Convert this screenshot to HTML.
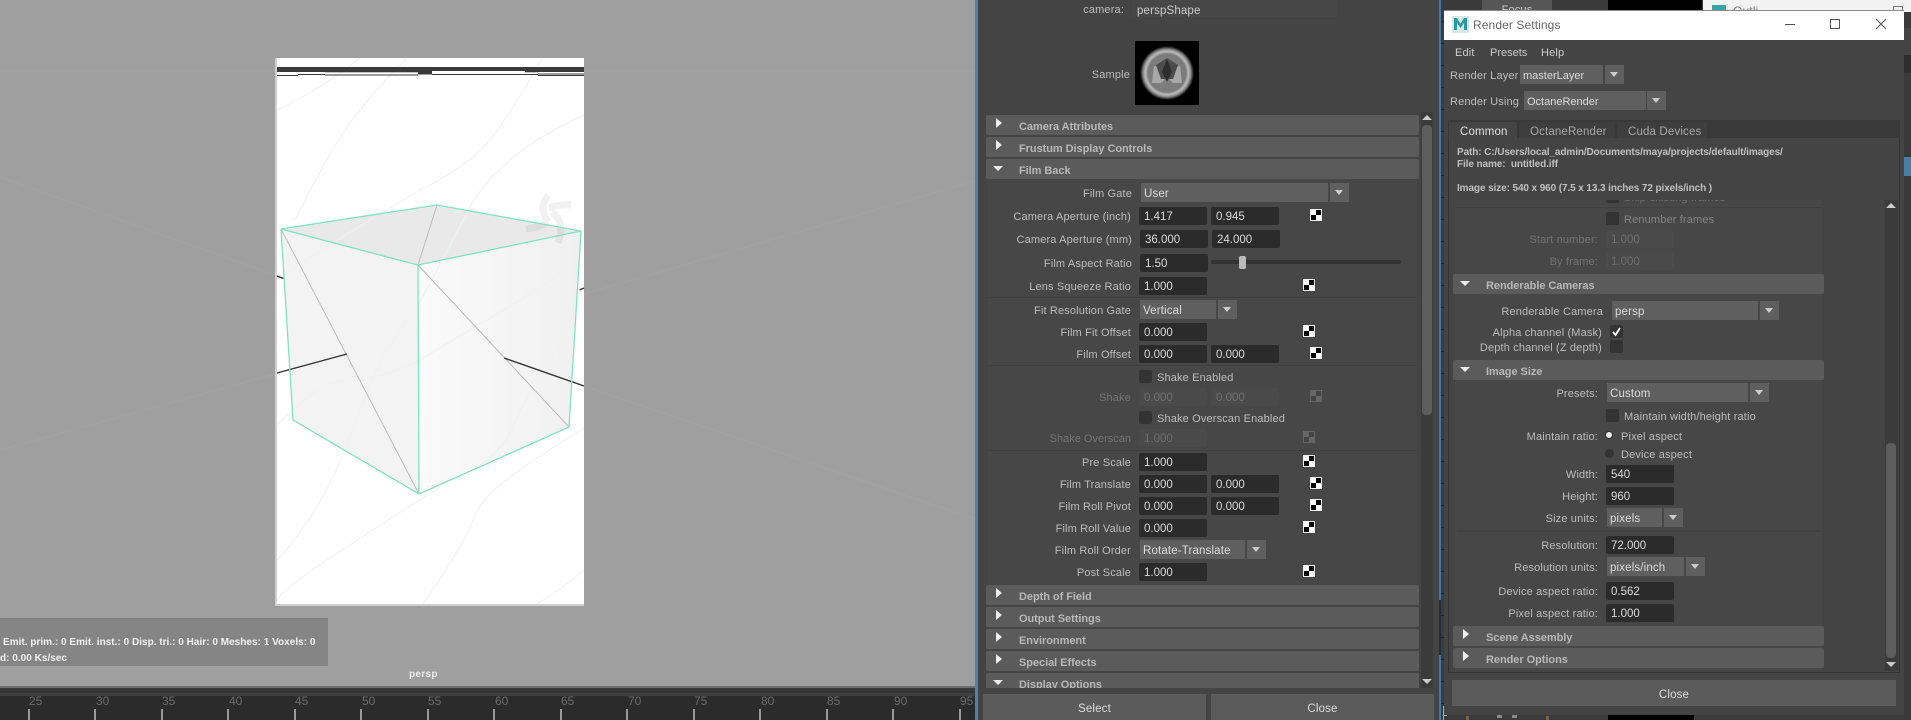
<!DOCTYPE html>
<html><head><meta charset="utf-8"><title>Render Settings</title>
<style>
html,body{margin:0;padding:0;background:#444;}
#p{position:relative;width:1911px;height:720px;overflow:hidden;background:#444;font-family:"Liberation Sans",sans-serif;font-size:11px;color:#bdbdbd;letter-spacing:.15px;}
#p div,#p span.a{position:absolute;white-space:pre;box-sizing:border-box;}
.la{left:832px;width:300px;text-align:right;height:18px;line-height:20px;}
.lb{left:831px;width:300px;text-align:right;height:18px;line-height:20px;}
.lr{left:1298px;width:300px;text-align:right;height:18px;line-height:20px;}
.dim{color:#737373;}
.f{height:18px;width:68px;background:#2b2b2b;border-radius:2px;padding-left:5px;line-height:21px;color:#dcdcdc;font-size:11.5px;letter-spacing:0;}
.fd{background:#4a4a4a;color:#6f6f6f;}
.dd{height:19px;background:#5f5f5f;padding-left:3px;line-height:22px;color:#dcdcdc;font-size:11.5px;}
.ar{height:19px;width:19px;background:#5f5f5f;}
.ar:after{content:"";position:absolute;left:5px;top:7px;border-left:4.5px solid transparent;border-right:4.5px solid transparent;border-top:5px solid #ccc;}
.h{height:20px;background:#5b5b5b;border-radius:2px;font-weight:bold;color:#b8b8b8;line-height:24px;padding-left:33px;font-size:11px;letter-spacing:-.05px;}
.h.a1{left:986px;width:433px;}
.h.a2{left:1453px;width:371px;}
.tr{left:10px;top:3px;width:0;height:0;border-top:5.5px solid transparent;border-bottom:5.5px solid transparent;border-left:6px solid #eee;}
.td{left:7px;top:7px;width:0;height:0;border-left:5.5px solid transparent;border-right:5.5px solid transparent;border-top:5.5px solid #eee;}
.c{width:12px;height:12px;border:1px solid #eee;background:conic-gradient(#000 25%,#fff 0 50%,#000 0 75%,#fff 0);}
.cd{border-color:#666;background:conic-gradient(#444 25%,#666 0 50%,#444 0 75%,#666 0);}
.k{width:13px;height:13px;background:#333;border-radius:2px;}
.t{height:18px;line-height:20px;}
.p{font-weight:bold;font-size:10px;color:#c0c0c0;letter-spacing:-.1px;line-height:18px;}
.b{background:#5b5b5b;text-align:center;color:#ddd;line-height:30px;font-size:11.5px;}
.n{top:709px;width:2px;height:11px;background:#999;}
.m{top:693px;width:24px;height:16px;line-height:16px;color:#6c6c6c;font-size:12px;letter-spacing:0;}
.sep{height:1px;background:#404040;}
</style></head><body><div id="p">

<!-- viewport -->
<div style="left:0;top:0;width:975px;height:686px;background:#9f9f9f"></div>
<svg style="position:absolute;left:0;top:0" width="975" height="686">
<g stroke="#a3a3a3" stroke-width="1" fill="none">
<path d="M0 177L275 275M584 386L975 519M0 450L275 374M584 294L975 181M0 71H275M584 71H975"/>
</g>
<rect x="275" y="58" width="309" height="548" fill="#cfcfcf"/>
<rect x="277" y="58" width="307" height="546" fill="#fff"/>
<polygon points="281,229 437,205 581,231 418,265" fill="#e9e9e9"/>
<polygon points="281,229 418,265 419,494 293,420" fill="#f3f3f3"/>
<linearGradient id="g" x1="0" y1="0" x2="1" y2="0"><stop offset="0" stop-color="#fafafa"/><stop offset="1" stop-color="#f0f0f0"/></linearGradient>
<polygon points="418,265 581,231 569,427 419,494" fill="url(#g)"/>
<g stroke="#f0f0f0" stroke-width="1" fill="none">
<path d="M277 110Q320 90 360 58"/>
<path d="M295 220Q333 143 360 110T407 58"/>
<path d="M542 58Q510 115 490 140T420 190Q370 220 333 243T277 280"/>
<path d="M584 115Q540 135 510 160T467 213Q440 265 417 307"/>
<path d="M577 263Q530 295 487 320T420 360Q380 380 350 380T277 425"/>
<path d="M575 320Q555 350 537 380T513 427T487 460T427 487"/>
<path d="M407 320Q395 340 387 350T350 437T277 560"/>
<path d="M584 428Q540 455 510 477T473 520T423 604"/>
<path d="M440 487Q380 525 327 560T277 604"/>
<path d="M584 570Q560 590 537 604"/>
</g>
<g fill="#3a3a3a">
<rect x="277" y="67" width="307" height="4"/>
<rect x="277" y="71" width="48" height="1"/><rect x="277" y="75" width="21" height="1"/><rect x="298" y="74" width="27" height="1"/>
<rect x="325" y="71" width="93" height="1.3"/><rect x="325" y="74.5" width="93" height="1"/>
<rect x="418" y="71" width="14" height="3.5"/>
<rect x="432" y="74" width="93" height="1"/>
<rect x="525" y="71" width="13" height="1.3"/><rect x="525" y="74" width="13" height="1"/>
<rect x="538" y="71" width="46" height="1"/><rect x="538" y="73.5" width="46" height="1"/><rect x="538" y="75" width="46" height="1"/>
</g>
<g stroke="#000" stroke-width="7" fill="none" opacity=".055">
<path d="M548 222Q538 208 548 195M549 208Q560 204 571 205M552 212Q566 222 558 243M548 222Q538 228 526 229"/>
</g>
<g stroke="#bbb" stroke-width="1" fill="none"><path d="M281 229L419 494M418 265L569 427M418 265L437 205"/></g>
<g stroke="#333" stroke-width="1.400" fill="none"><path d="M277 373L347 354M504 358L584 386"/><path d="M277 276L284 278.7M579.5 290L584 288"/></g>
<g stroke="#7ee4bf" stroke-width="1.300" fill="none">
<path d="M281 229L437 205L581 231L418 265ZM281 229L293 420L419 494L569 427L581 231M418 265L419 494"/>
</g>
</svg>
<div style="left:0;top:618px;width:328px;height:48px;background:#858585"></div>
<div style="left:3px;top:635px;height:16px;line-height:16px;color:#f2f2f2;font-weight:bold;font-size:10px;letter-spacing:.02px">Emit. prim.: 0 Emit. inst.: 0 Disp. tri.: 0 Hair: 0 Meshes: 1 Voxels: 0</div>
<div style="left:0;top:651px;height:16px;line-height:16px;color:#f2f2f2;font-weight:bold;font-size:10px;letter-spacing:.02px">d: 0.00 Ks/sec</div>
<div style="left:409px;top:667px;height:16px;line-height:16px;color:#ececec;font-weight:bold;font-size:10px;letter-spacing:.3px">persp</div>

<!-- timeline -->
<div style="left:0;top:686px;width:975px;height:2px;background:#6e6e6e"></div>
<div style="left:0;top:688px;width:975px;height:3px;background:#3a3a3a"></div>
<div style="left:0;top:691px;width:975px;height:2px;background:#333"></div>
<div style="left:0;top:693px;width:975px;height:3px;background:#3f3f3f"></div>
<div style="left:0;top:696px;width:975px;height:24px;background:#2b2b2b"></div>
<div class="n" style="left:28px"></div><div class="n" style="left:94px"></div><div class="n" style="left:161px"></div><div class="n" style="left:227px"></div><div class="n" style="left:294px"></div><div class="n" style="left:360px"></div><div class="n" style="left:427px"></div><div class="n" style="left:493px"></div><div class="n" style="left:560px"></div><div class="n" style="left:626px"></div><div class="n" style="left:693px"></div><div class="n" style="left:759px"></div><div class="n" style="left:826px"></div><div class="n" style="left:892px"></div><div class="n" style="left:959px"></div>
<div class="m" style="left:29px;top:693px">25</div><div class="m" style="left:96px">30</div><div class="m" style="left:162px">35</div><div class="m" style="left:229px">40</div><div class="m" style="left:295px">45</div><div class="m" style="left:362px">50</div><div class="m" style="left:428px">55</div><div class="m" style="left:495px">60</div><div class="m" style="left:561px">65</div><div class="m" style="left:628px">70</div><div class="m" style="left:694px">75</div><div class="m" style="left:761px">80</div><div class="m" style="left:827px">85</div><div class="m" style="left:894px">90</div><div class="m" style="left:960px">95</div>

<!-- attribute editor -->
<div style="left:975px;top:0;width:3px;height:720px;background:#4a83b0"></div>
<div style="left:978px;top:0;width:461px;height:720px;background:#444"></div>
<div style="left:824px;width:300px;top:0;text-align:right;height:18px;line-height:20px">camera:</div>
<div style="left:1132px;top:0;width:206px;height:17px;background:#474747;padding-left:5px;line-height:22px;color:#ccc;font-size:11.5px">perspShape</div>
<div class="la" style="left:830px;top:65px">Sample</div>
<div style="left:1135px;top:41px;width:64px;height:64px;background:#000"></div>
<svg style="position:absolute;left:1135px;top:41px" width="64" height="64">
<radialGradient id="l"><stop offset="0" stop-color="#858585"/><stop offset=".7" stop-color="#7a7a7a"/><stop offset=".8" stop-color="#bcbcbc"/><stop offset=".88" stop-color="#8a8a8a"/><stop offset="1" stop-color="#000"/></radialGradient>
<circle cx="32" cy="32" r="27" fill="url(#l)"/>
<polygon points="19,25 25,26 32,36 39,26 45,25 47,42 38,42 32,36 26,42 17,42" fill="#a8a8a8"/>
<polygon points="32,17 43,24 38,38 26,38 21,24" fill="#4c4c4c"/>
<polygon points="32,18 37,31 32,41 27,31" fill="#2e2e2e"/>
</svg>

<div style="left:988px;top:179px;width:429px;height:406px;background:#474747"></div>
<div class="h a1" style="top:115px">Camera Attributes<div class="tr"></div></div>
<div class="h a1" style="top:137px">Frustum Display Controls<div class="tr"></div></div>
<div class="h a1" style="top:159px">Film Back<div class="td"></div></div>

<div class="la" style="top:184px">Film Gate</div>
<div class="dd" style="left:1141px;top:183px;width:187px">User</div><div class="ar" style="left:1330px;top:183px"></div>

<div class="lb" style="top:207px">Camera Aperture (inch)</div>
<div class="f" style="left:1139px;top:207px">1.417</div><div class="f" style="left:1211px;top:207px">0.945</div><div class="c" style="left:1310px;top:209px"></div>

<div class="la" style="top:230px">Camera Aperture (mm)</div>
<div class="f" style="left:1140px;top:230px">36.000</div><div class="f" style="left:1212px;top:230px">24.000</div>

<div class="la" style="top:254px">Film Aspect Ratio</div>
<div class="f" style="left:1140px;top:254px">1.50</div>
<div style="left:1211px;top:260px;width:190px;height:4px;background:#333;border-radius:2px"></div>
<div style="left:1239px;top:256px;width:7px;height:13px;background:#bbb;border-radius:2px"></div>

<div class="lb" style="top:277px">Lens Squeeze Ratio</div>
<div class="f" style="left:1139px;top:277px">1.000</div><div class="c" style="left:1303px;top:279px"></div>
<div class="sep" style="left:988px;top:297px;width:429px"></div>

<div class="lb" style="top:301px">Fit Resolution Gate</div>
<div class="dd" style="left:1140px;top:300px;width:76px">Vertical</div><div class="ar" style="left:1218px;top:300px"></div>

<div class="lb" style="top:323px">Film Fit Offset</div>
<div class="f" style="left:1139px;top:323px">0.000</div><div class="c" style="left:1303px;top:325px"></div>

<div class="lb" style="top:345px">Film Offset</div>
<div class="f" style="left:1139px;top:345px">0.000</div><div class="f" style="left:1211px;top:345px">0.000</div><div class="c" style="left:1310px;top:347px"></div>
<div class="sep" style="left:988px;top:365px;width:429px"></div>

<div class="k" style="left:1139px;top:370px"></div><div class="t" style="left:1157px;top:368px">Shake Enabled</div>
<div class="lb dim" style="top:388px">Shake</div>
<div class="f fd" style="left:1139px;top:388px">0.000</div><div class="f fd" style="left:1211px;top:388px">0.000</div><div class="c cd" style="left:1310px;top:390px"></div>
<div class="k" style="left:1139px;top:411px"></div><div class="t" style="left:1157px;top:409px">Shake Overscan Enabled</div>
<div class="lb dim" style="top:429px;letter-spacing:0">Shake Overscan</div>
<div class="f fd" style="left:1139px;top:429px">1.000</div><div class="c cd" style="left:1303px;top:431px"></div>
<div class="sep" style="left:988px;top:450px;width:429px"></div>

<div class="lb" style="top:453px">Pre Scale</div>
<div class="f" style="left:1139px;top:453px">1.000</div><div class="c" style="left:1303px;top:455px"></div>
<div class="lb" style="top:475px">Film Translate</div>
<div class="f" style="left:1139px;top:475px">0.000</div><div class="f" style="left:1211px;top:475px">0.000</div><div class="c" style="left:1310px;top:477px"></div>
<div class="lb" style="top:497px">Film Roll Pivot</div>
<div class="f" style="left:1139px;top:497px">0.000</div><div class="f" style="left:1211px;top:497px">0.000</div><div class="c" style="left:1310px;top:499px"></div>
<div class="lb" style="top:519px">Film Roll Value</div>
<div class="f" style="left:1139px;top:519px">0.000</div><div class="c" style="left:1303px;top:521px"></div>
<div class="lb" style="top:541px">Film Roll Order</div>
<div class="dd" style="left:1140px;top:540px;width:105px">Rotate-Translate</div><div class="ar" style="left:1247px;top:540px"></div>
<div class="lb" style="top:563px">Post Scale</div>
<div class="f" style="left:1139px;top:563px">1.000</div><div class="c" style="left:1303px;top:565px"></div>

<div class="h a1" style="top:585px">Depth of Field<div class="tr"></div></div>
<div class="h a1" style="top:607px">Output Settings<div class="tr"></div></div>
<div class="h a1" style="top:629px">Environment<div class="tr"></div></div>
<div class="h a1" style="top:651px">Special Effects<div class="tr"></div></div>
<div class="h a1" style="top:673px;height:15px;overflow:hidden;border-radius:2px 2px 0 0">Display Options<div class="td"></div></div>

<div style="left:1421px;top:112px;width:12px;height:576px;background:#3b3b3b"></div>
<div style="left:1422px;top:125px;width:10px;height:290px;background:#5d5d5d;border-radius:4px"></div>
<div style="left:1422px;top:115px;width:0;height:0;border-left:5px solid transparent;border-right:5px solid transparent;border-bottom:5px solid #ccc"></div>
<div style="left:1422px;top:679px;width:0;height:0;border-left:5px solid transparent;border-right:5px solid transparent;border-top:5px solid #ccc"></div>

<div class="b" style="left:983px;top:694px;width:223px;height:26px">Select</div>
<div class="b" style="left:1211px;top:694px;width:223px;height:26px">Close</div>

<!-- behind render settings -->
<div style="left:1439px;top:0;width:2px;height:600px;background:#3f79a8"></div>
<div style="left:1439px;top:600px;width:2px;height:55px;background:#1e3040"></div>
<div style="left:1439px;top:655px;width:2px;height:65px;background:#3f79a8"></div>
<div style="left:1441px;top:0;width:470px;height:720px;background:#3a3a3a"></div>
<div style="left:1441px;top:0;width:3px;height:720px;background:repeating-linear-gradient(#3c3c3c 0 21px,#222 21px 22px)"></div>
<div style="left:1482px;top:0;width:70px;height:12px;background:#565656;text-align:center;color:#ccc;line-height:12px;overflow:hidden"><span style="position:relative;top:4px">Focus</span></div>
<div style="left:1608px;top:0;width:94px;height:12px;background:#000"></div>
<div style="left:1703px;top:0;width:208px;height:12px;background:#f2f2f2"></div>
<div style="left:1712px;top:5px;width:14px;height:7px;background:#3aa3a3"></div>
<div style="left:1733px;top:3px;height:16px;line-height:16px;color:#777;font-size:12px">Outli</div>
<div style="left:1893px;top:6px;width:10px;height:6px;border:1px solid #777;border-bottom:0"></div>
<div style="left:1904px;top:28px;width:7px;height:27px;background:#444"></div>
<div style="left:1904px;top:55px;width:7px;height:18px;background:#2e2e2e"></div>
<div style="left:1904px;top:157px;width:7px;height:19px;background:#4a7fa5"></div>
<div style="left:1608px;top:714px;width:86px;height:6px;background:#000"></div>
<div style="left:1443px;top:706px;width:1px;height:14px;background:#aaa"></div>
<div style="left:1443px;top:715px;width:4px;height:1px;background:#aaa"></div>
<div style="left:1466px;top:716px;width:3px;height:4px;background:#7d6650"></div>
<div style="left:1546px;top:716px;width:3px;height:4px;background:#7d6650"></div>
<div style="left:1497px;top:715px;width:5px;height:3px;background:#888"></div>
<div style="left:1512px;top:715px;width:5px;height:3px;background:#888"></div>

<!-- Render settings window -->
<div style="left:1444px;top:10px;width:460px;height:705px;background:#444"></div>
<div style="left:1444px;top:10px;width:460px;height:30px;background:#fff;border-top:1px solid #8a8a8a"></div>
<svg style="position:absolute;left:1452px;top:16px" width="17" height="17"><rect width="17" height="17" fill="#d6e8e8"/><path d="M2 14V2H5L8.500 8L12 2H15V14H12V7L8.500 12L5 7V14Z" fill="#2a9a9e"/></svg>
<div class="t" style="left:1473px;top:15px;color:#666;font-size:12px;letter-spacing:.1px">Render Settings</div>
<svg style="position:absolute;left:1780px;top:14px" width="115" height="20" fill="none" stroke="#555" stroke-width="1"><path d="M5 10.500H15"/><rect x="50.500" y="5.500" width="9" height="9"/><path d="M96 5L106 15M106 5L96 15"/></svg>

<div class="t" style="left:1455px;top:43px;color:#ccc">Edit</div>
<div class="t" style="left:1490px;top:43px;color:#ccc;letter-spacing:0">Presets</div>
<div class="t" style="left:1541px;top:43px;color:#ccc">Help</div>
<div class="t" style="left:1450px;top:66px">Render Layer</div>
<div class="dd" style="left:1520px;top:65px;width:83px;font-size:11px;letter-spacing:0">masterLayer</div><div class="ar" style="left:1605px;top:65px"></div>
<div class="t" style="left:1450px;top:92px">Render Using</div>
<div class="dd" style="left:1524px;top:91px;width:122px;font-size:11px;letter-spacing:0">OctaneRender</div><div class="ar" style="left:1647px;top:91px"></div>

<div style="left:1448px;top:120px;width:452px;height:18px;background:#393939"></div>
<div style="left:1449px;top:122px;width:68px;height:17px;background:#444;padding-left:11px;line-height:20px;color:#e0e0e0;font-size:11.5px">Common</div>
<div style="left:1519px;top:122px;width:96px;height:16px;background:#3e3e3e;padding-left:11px;line-height:20px;color:#a8a8a8;font-size:11.5px">OctaneRender</div>
<div style="left:1617px;top:122px;width:90px;height:16px;background:#3e3e3e;padding-left:11px;line-height:20px;color:#a8a8a8;font-size:11.5px">Cuda Devices</div>
<div style="left:1448px;top:138px;width:452px;height:535px;border:1px solid #333;border-top:0;background:#444"></div>

<div class="t p" style="left:1457px;top:144px">Path: C:/Users/local_admin/Documents/maya/projects/default/images/</div>
<div class="t p" style="left:1457px;top:156px">File name:  untitled.iff</div>
<div class="t p" style="left:1457px;top:180px">Image size: 540 x 960 (7.5 x 13.3 inches 72 pixels/inch )</div>

<div style="left:1455px;top:200px;width:367px;height:470px;background:#474747"></div>
<div style="left:1455px;top:200px;width:367px;height:7px;overflow:hidden"><div class="k" style="left:151px;top:-10px"></div><div class="t dim" style="left:169px;top:-12px">Skip existing frames</div></div>
<div class="sep" style="left:1455px;top:207px;width:367px"></div>
<div class="k" style="left:1606px;top:212px"></div><div class="t" style="left:1624px;top:210px;color:#858585">Renumber frames</div>
<div class="lr dim" style="top:230px">Start number:</div><div class="f fd" style="left:1606px;top:230px">1.000</div>
<div class="lr dim" style="top:252px">By frame:</div><div class="f fd" style="left:1606px;top:252px">1.000</div>

<div class="h a2" style="top:274px">Renderable Cameras<div class="td"></div></div>
<div class="lr" style="left:1303px;top:302px">Renderable Camera</div>
<div class="dd" style="left:1612px;top:301px;width:146px">persp</div><div class="ar" style="left:1760px;top:301px"></div>
<div class="lr" style="left:1302px;top:323px">Alpha channel (Mask)</div>
<div class="k" style="left:1610px;top:325px"></div>
<svg style="position:absolute;left:1610px;top:325px" width="13" height="13" fill="none" stroke="#fff" stroke-width="1.800"><path d="M3 7L5.500 10L10 3"/></svg>
<div class="lr" style="left:1302px;top:338px">Depth channel (Z depth)</div>
<div class="k" style="left:1610px;top:340px"></div>

<div class="h a2" style="top:360px">Image Size<div class="td"></div></div>
<div class="lr" style="top:384px">Presets:</div>
<div class="dd" style="left:1607px;top:383px;width:141px">Custom</div><div class="ar" style="left:1750px;top:383px"></div>
<div class="k" style="left:1606px;top:409px"></div><div class="t" style="left:1624px;top:407px">Maintain width/height ratio</div>
<div class="lr" style="top:427px">Maintain ratio:</div>
<div style="left:1605px;top:431px;width:8px;height:8px;border-radius:50%;background:#eee;border:1px solid #333"></div><div class="t" style="left:1621px;top:427px">Pixel aspect</div>
<div style="left:1605px;top:449px;width:9px;height:9px;border-radius:50%;background:#333"></div><div class="t" style="left:1621px;top:445px">Device aspect</div>
<div class="lr" style="top:465px">Width:</div><div class="f" style="left:1606px;top:465px">540</div>
<div class="lr" style="top:487px">Height:</div><div class="f" style="left:1606px;top:487px">960</div>
<div class="lr" style="top:509px">Size units:</div>
<div class="dd" style="left:1607px;top:508px;width:55px">pixels</div><div class="ar" style="left:1664px;top:508px"></div>
<div style="left:1457px;top:530px;width:363px;height:2px;background:#414141"></div>
<div class="lr" style="top:536px">Resolution:</div><div class="f" style="left:1606px;top:536px">72.000</div>
<div class="lr" style="top:558px">Resolution units:</div>
<div class="dd" style="left:1607px;top:557px;width:77px">pixels/inch</div><div class="ar" style="left:1686px;top:557px"></div>
<div class="lr" style="top:582px">Device aspect ratio:</div><div class="f" style="left:1606px;top:582px">0.562</div>
<div class="lr" style="top:604px">Pixel aspect ratio:</div><div class="f" style="left:1606px;top:604px">1.000</div>
<div class="h a2" style="top:626px">Scene Assembly<div class="tr"></div></div>
<div class="h a2" style="top:648px">Render Options<div class="tr"></div></div>

<div style="left:1885px;top:200px;width:13px;height:471px;background:#3b3b3b"></div>
<div style="left:1886px;top:443px;width:10px;height:215px;background:#5d5d5d;border-radius:4px"></div>
<div style="left:1886px;top:203px;width:0;height:0;border-left:5px solid transparent;border-right:5px solid transparent;border-bottom:5px solid #ccc"></div>
<div style="left:1886px;top:662px;width:0;height:0;border-left:5px solid transparent;border-right:5px solid transparent;border-top:5px solid #ccc"></div>

<div class="b" style="left:1452px;top:680px;width:444px;height:26px">Close</div>
</div></body></html>
